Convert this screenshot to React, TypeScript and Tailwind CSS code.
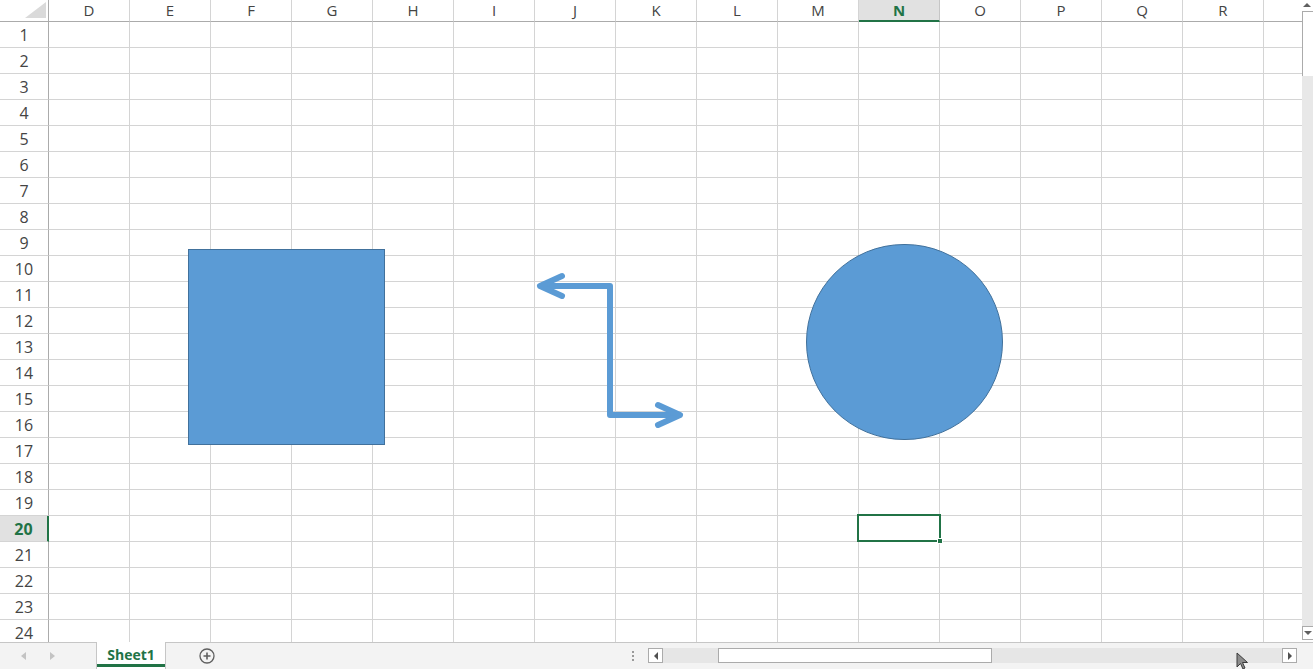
import React from "react";

const COLS = ["D", "E", "F", "G", "H", "I", "J", "K", "L", "M", "N", "O", "P", "Q", "R", ""];
const ROWS = Array.from({ length: 24 }, (_, i) => i + 1);
const ACTIVE_COL = "N";
const ACTIVE_ROW = 20;

const font = { fontFamily: '"Open Sans", "Liberation Sans", sans-serif' };

function SheetGrid() {
  return (
    <div className="grid grid-cols-[49px_repeat(16,81px)] grid-rows-[22px_repeat(24,26px)] w-max">
      {/* corner */}
      <div className="relative border-r border-b border-[#ababab] bg-white">
        <svg className="absolute left-0 top-0" width="48" height="21">
          <polygon points="25,18 46,18 46,2" fill="#dadada" />
        </svg>
      </div>
      {COLS.map((c, i) => {
        const active = c === ACTIVE_COL;
        return (
          <div
            key={`h${i}`}
            className={
              active
                ? "flex items-center justify-center bg-[#e1e1e1] border-r border-[#c6c6c6] border-b-2 border-b-[#217346] text-[15px] font-bold text-[#217346]"
                : "flex items-center justify-center bg-white border-r border-[#d4d4d4] border-b border-b-[#ababab] text-[15px] text-[#444]"
            }
          >
            {c}
          </div>
        );
      })}
      {ROWS.map((r) => (
        <React.Fragment key={r}>
          <div
            className={
              r === ACTIVE_ROW
                ? "flex items-center justify-center bg-[#e1e1e1] border-r-2 border-r-[#217346] border-b border-[#d4d4d4] text-[16px] font-bold text-[#217346]"
                : "flex items-center justify-center bg-white border-r border-r-[#ababab] border-b border-[#d4d4d4] text-[16px] text-[#444]"
            }
          >
            {r}
          </div>
          {COLS.map((c, i) => (
            <div key={`${r}-${i}`} className="border-r border-b border-[#d4d4d4]" />
          ))}
        </React.Fragment>
      ))}
    </div>
  );
}

function ElbowArrow() {
  return (
    <svg className="absolute left-[530px] top-[265px]" width="160" height="170" viewBox="0 0 160 170">
      <g fill="none" stroke="#5b9bd5" strokeWidth="6" strokeLinecap="round" strokeLinejoin="round">
        <path d="M12 21 H80 V150 H148" />
        <path d="M32 11 L10 21 L32 31" />
        <path d="M128 140 L150 150 L128 160" />
      </g>
    </svg>
  );
}

function VerticalScroll() {
  return (
    <div className="w-[11px] h-full overflow-hidden bg-white flex flex-col">
      <div className="h-[11px] flex items-start justify-end pr-[2px] pt-[3px]">
        <svg width="8" height="4">
          <polygon points="0,4 4,0 8,4" fill="#606060" />
        </svg>
      </div>
      <div className="h-[65px] border-l border-t border-[#ababab] bg-white" />
      <div className="flex-1 bg-[#e8e8e8]" />
      <div className="h-[14px] border-l border-t border-b border-[#ababab] bg-white flex items-center justify-end pr-[1px]">
        <svg width="8" height="4">
          <polygon points="0,0 8,0 4,4" fill="#606060" />
        </svg>
      </div>
      <div className="h-[2px] bg-white" />
    </div>
  );
}

function Cursor() {
  return (
    <svg className="absolute left-[1236px] top-[652px]" width="14" height="18" viewBox="0 0 14 18">
      <path d="M1 1 L1 15 L4.5 11.5 L7 17 L9 16 L6.5 10.5 L11.5 10.5 Z" fill="#8c8c8c" stroke="#3a3a3a" strokeWidth="1" strokeLinejoin="round" />
    </svg>
  );
}

function BottomBar() {
  return (
    <div className="relative h-[27px] bg-[#f3f3f3] flex items-stretch">
      <div className="absolute left-0 right-0 top-0 h-px bg-[#c6c6c6]" />
      {/* sheet navigation */}
      <div className="w-[96px] flex items-center pl-[21px] gap-[24px]">
        <svg width="5" height="8">
          <polygon points="5,0 0,4 5,8" fill="#c3c3c3" />
        </svg>
        <svg width="5" height="8">
          <polygon points="0,0 5,4 0,8" fill="#c3c3c3" />
        </svg>
      </div>
      {/* active tab */}
      <div className="relative w-[70px] bg-white border-l border-r border-[#c6c6c6] flex items-center justify-center">
        <span className="text-[14px] font-bold text-[#217346] -mt-[2px]">Sheet1</span>
        <div className="absolute left-0 right-0 bottom-[2px] h-[3px] bg-[#217346]" />
      </div>
      {/* new sheet */}
      <div className="w-[82px] flex items-center justify-center">
        <svg width="16" height="16" viewBox="0 0 16 16">
          <circle cx="8" cy="8" r="7" fill="none" stroke="#5f5f5f" strokeWidth="1.3" />
          <path d="M8 4.5 V11.5 M4.5 8 H11.5" stroke="#5f5f5f" strokeWidth="1.6" />
        </svg>
      </div>
      <div className="flex-1" />
      {/* splitter dots */}
      <div className="w-[14px] flex flex-col items-center justify-center gap-[2px] mr-[8px]">
        <div className="w-[2px] h-[2px] bg-[#9a9a9a]" />
        <div className="w-[2px] h-[2px] bg-[#9a9a9a]" />
        <div className="w-[2px] h-[2px] bg-[#9a9a9a]" />
      </div>
      {/* horizontal scrollbar */}
      <div className="w-[665px] flex items-center pr-[16px]">
        <div className="flex-1 h-[15px] flex items-stretch bg-[#e6e6e6]">
          <div className="w-[15px] bg-white border border-[#ababab] flex items-center justify-center">
            <svg width="4" height="8">
              <polygon points="4,0 0,4 4,8" fill="#505050" />
            </svg>
          </div>
          <div className="w-[55px]" />
          <div className="w-[274px] bg-white border border-[#ababab]" />
          <div className="flex-1" />
          <div className="w-[15px] bg-white border border-[#ababab] flex items-center justify-center">
            <svg width="4" height="8">
              <polygon points="0,0 4,4 0,8" fill="#505050" />
            </svg>
          </div>
        </div>
      </div>
    </div>
  );
}

export default function App() {
  return (
    <div className="relative w-[1313px] h-[669px] overflow-hidden bg-white flex flex-col" style={font}>
      <div className="flex h-[642px]">
        <div className="relative flex-1 overflow-hidden">
          <SheetGrid />

          {/* rectangle */}
          <div className="absolute left-[188px] top-[249px] w-[197px] h-[196px] bg-[#5b9bd5] border border-[#41719c]" />

          <ElbowArrow />

          {/* circle */}
          <div className="absolute left-[806px] top-[244px] w-[197px] h-[196px] rounded-full bg-[#5b9bd5] border border-[#41719c]" />

          {/* active cell N20 */}
          <div className="absolute left-[857px] top-[514px] w-[84px] h-[28px] border-2 border-[#217346]" />
          <div className="absolute left-[937px] top-[538px] w-[6px] h-[6px] bg-[#217346] border border-white" />
        </div>
        <VerticalScroll />
      </div>
      <BottomBar />
      <Cursor />
    </div>
  );
}
